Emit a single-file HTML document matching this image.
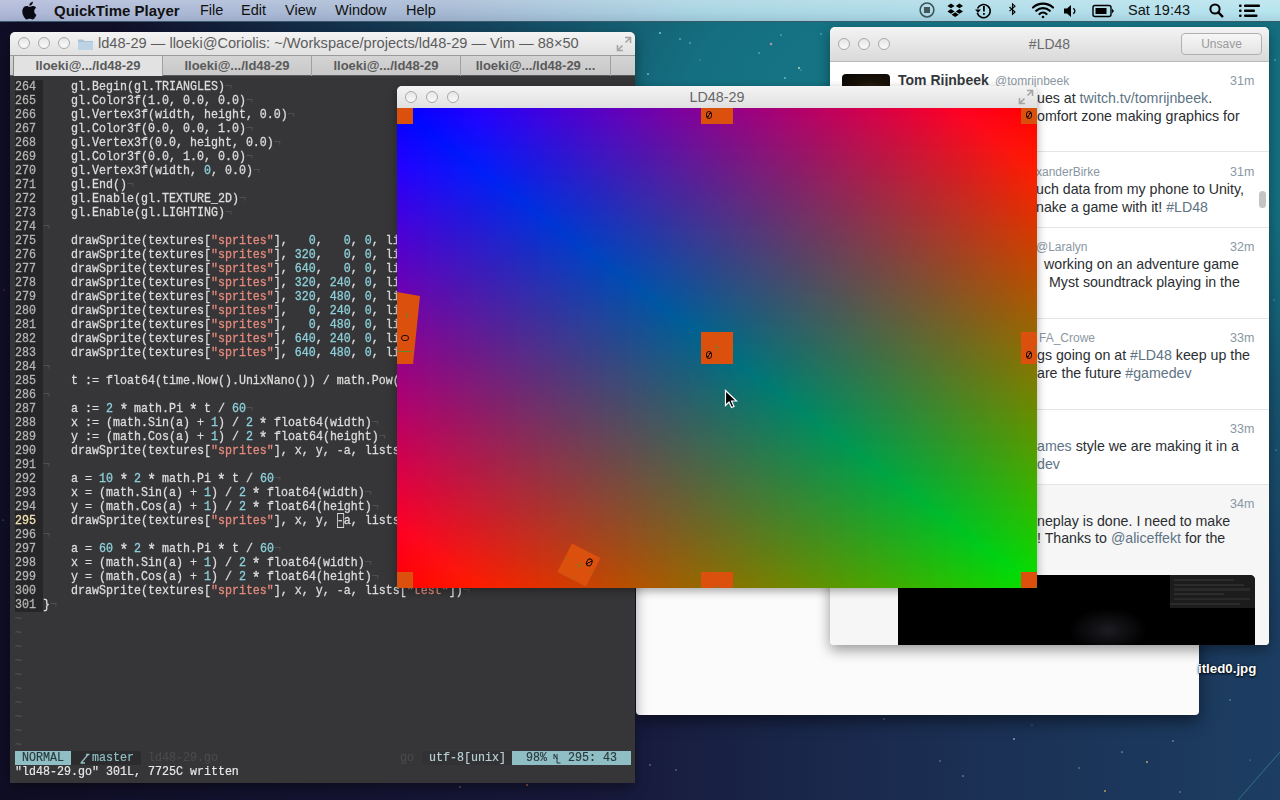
<!DOCTYPE html>
<html><head><meta charset="utf-8">
<style>
*{margin:0;padding:0;box-sizing:border-box}
html,body{width:1280px;height:800px;overflow:hidden}
body{position:relative;font-family:"Liberation Sans",sans-serif;
background:radial-gradient(ellipse 900px 520px at 1000px 120px,#177a8a 0%,#147080 35%,rgba(20,100,120,.6) 60%,rgba(20,60,100,0) 100%),linear-gradient(to left,#1c3e62 0%,#1a2c50 30%,#17183a 55%,#100e26 100%);}
.abs{position:absolute}
#menubar{left:0;top:0;width:1280px;height:22px;background:linear-gradient(rgba(255,255,255,.16),rgba(255,255,255,0) 60%,rgba(0,20,60,.08)),linear-gradient(to right,#b0b9d8 0%,#a6b9d3 35%,#a8d4e2 55%,#b6e4ee 100%);border-bottom:1px solid #3a5a6a;font-size:14.5px;color:#111}
#menubar span{position:absolute;top:2px;white-space:nowrap}
.win{position:absolute;border-radius:5px 5px 0 0;box-shadow:0 5px 14px rgba(0,0,0,.4)}
.title{position:absolute;left:0;top:0;right:0;height:22px;background:linear-gradient(#f4f4f4,#e0e0e0);border-radius:5px 5px 0 0;color:#5c5c5c;font-size:13px;text-align:center;line-height:22px;white-space:nowrap}
.tl{position:absolute;top:5px;width:12px;height:12px;border-radius:50%;border:1px solid #a8a8a8;background:linear-gradient(#e6e6e6,#fafafa)}
#vim{left:10px;top:32px;width:625px;height:751px;background:#363638}
#vim .title{height:23px;line-height:23px;font-size:14.6px;text-align:left}
#tabs{position:absolute;left:0;top:23px;width:625px;height:21px;background:linear-gradient(#d4d4d4,#c8c8c8);border-top:1px solid #9a9a9a;border-bottom:1px solid #5a5a5a}
.tab{position:absolute;top:0;height:20px;line-height:19px;font-size:13px;font-weight:bold;color:#5a5a5a;text-align:center;border-left:1px solid #a0a0a0}
#code{position:absolute;left:5px;top:48px;font-family:"Liberation Mono",monospace;font-size:13.4px;line-height:14px;color:#dcdcdc;white-space:pre;-webkit-text-stroke:0.3px;transform:scaleX(0.8706);transform-origin:0 0}
.ln{background:#262628;color:#b4b4b4;display:inline-block}
.cur{color:#f0e0b0}
.n{color:#8dd0da}
.s{color:#e58a7c}
.e{color:#505054}
.ast{display:inline-block;transform:translateY(2px) scale(1.25)}
.cu{outline:1px solid #d8d8d8;outline-offset:-1px}
#gl{left:397px;top:86px;width:640px;height:502px;background:#ddd;box-shadow:0 3px 10px rgba(0,0,0,.35)}
#glc{position:absolute;left:0;top:22px;width:640px;height:480px;overflow:hidden;background:linear-gradient(to top right,#ff0000,#000 50%,#ff0000)}
.tri{position:absolute;left:0;top:0;width:640px;height:480px}
#t1{clip-path:polygon(0 0,100% 0,100% 100%);background:linear-gradient(to bottom,#000,#00c400),linear-gradient(to right,#0000ff,#000),linear-gradient(to top right,#000 50%,#ff0000);background-blend-mode:screen}
#t2{clip-path:polygon(0 0,4px 0,100% calc(100% - 4px),100% 100%,0 100%);background:linear-gradient(to right,#000,#00c400),linear-gradient(to bottom,#0000ff,#000),linear-gradient(to top right,#ff0000,#000 50%);background-blend-mode:screen}
.spr{position:absolute;width:32px;height:32px;background:#dc500e}
.spr i{position:absolute;left:5px;top:19px;width:6px;height:8px;border:1.5px solid #1a0a00;border-radius:3px;font-style:normal;background:linear-gradient(to bottom right,transparent 42%,#1a0a00 42%,#1a0a00 58%,transparent 58%)}
.spr::before{content:'';position:absolute;left:0;top:15px;width:32px;height:1px;background:linear-gradient(to right,#5f8a2c 0 3px,transparent 3px 13px,#5f8a2c 13px 19px,transparent 19px 29px,#5f8a2c 29px);opacity:.45}
.spr::after{content:'';position:absolute;left:15px;top:0;width:1px;height:32px;background:linear-gradient(#5f8a2c 0 3px,transparent 3px 13px,#5f8a2c 13px 19px,transparent 19px 29px,#5f8a2c 29px);opacity:.45}
#tw{left:830px;top:27px;width:439px;height:618px;background:#fff;border-radius:5px 5px 4px 4px;overflow:hidden}
#wh{left:636px;top:560px;width:563px;height:155px;background:#fbfbfb;border-radius:0 0 4px 4px;box-shadow:0 6px 16px rgba(0,0,0,.5)}
.sep{position:absolute;left:0;width:439px;height:1px;background:#e3e6e8}
</style></head><body>
<svg class="abs" style="left:0;top:0" width="1280" height="800"><circle opacity=".75" cx="660" cy="33" r="0.96" fill="#8ff"/><circle opacity=".75" cx="680" cy="39" r="0.78" fill="#cff"/><circle opacity=".75" cx="690" cy="43" r="0.72" fill="#aff"/><circle opacity=".75" cx="771" cy="44" r="1.32" fill="#d9a0c0"/><circle opacity=".75" cx="759" cy="53" r="0.78" fill="#aef"/><circle opacity=".75" cx="781" cy="35" r="0.72" fill="#9ee"/><circle opacity=".75" cx="799" cy="68" r="0.90" fill="#ffe"/><circle opacity=".75" cx="821" cy="34" r="0.78" fill="#9df"/><circle opacity=".75" cx="801" cy="70" r="0.60" fill="#cce"/><circle opacity=".75" cx="785" cy="78" r="0.84" fill="#cff"/><circle opacity=".75" cx="648" cy="74" r="0.90" fill="#8ef"/><circle opacity=".75" cx="700" cy="60" r="0.60" fill="#8cc"/><circle opacity=".75" cx="1014" cy="739" r="0.96" fill="#9cf"/><circle opacity=".75" cx="1122" cy="752" r="0.84" fill="#9cf"/><circle opacity=".75" cx="1147" cy="762" r="0.96" fill="#ffd070"/><circle opacity=".75" cx="1173" cy="741" r="0.84" fill="#8cf"/><circle opacity=".75" cx="1105" cy="791" r="0.96" fill="#ffc060"/><circle opacity=".75" cx="1079" cy="768" r="0.72" fill="#9cf"/><circle opacity=".75" cx="963" cy="776" r="0.72" fill="#ddd"/><circle opacity=".75" cx="1180" cy="792" r="0.72" fill="#9cf"/><circle opacity=".75" cx="1032" cy="725" r="0.60" fill="#9bd"/><circle opacity=".75" cx="884" cy="719" r="0.78" fill="#aaf"/><circle opacity=".75" cx="940" cy="761" r="0.78" fill="#aaf"/><circle opacity=".75" cx="676" cy="770" r="0.66" fill="#ccc"/><circle opacity=".75" cx="650" cy="765" r="0.66" fill="#ccc"/><circle opacity=".75" cx="460" cy="787" r="0.84" fill="#e09050"/><circle opacity=".75" cx="527" cy="785" r="0.96" fill="#e08050"/><circle opacity=".75" cx="1275" cy="60" r="0.72" fill="#aff"/><circle opacity=".75" cx="1274" cy="300" r="0.60" fill="#aff"/><circle opacity=".75" cx="1276" cy="450" r="0.60" fill="#aff"/><circle opacity=".75" cx="4" cy="290" r="0.60" fill="#d07070"/><circle opacity=".75" cx="3" cy="520" r="0.60" fill="#aac"/><circle opacity=".75" cx="1230" cy="700" r="0.72" fill="#9cf"/><circle opacity=".75" cx="1250" cy="760" r="0.60" fill="#9cf"/><path d="M1238 800 L1280 752" stroke="#3a8a8a" stroke-width="1" opacity=".7"/></svg>

<div id="wh" class="abs"></div>
<div class="abs" style="left:1198px;top:661px;font-size:13.3px;font-weight:bold;color:#fff;text-shadow:0 1px 2px #000,0 0 3px rgba(0,0,0,.6)">itled0.jpg</div>

<div id="tw" class="win">
  <div class="title" style="height:35px;line-height:35px;font-size:14px;color:#6a6a6a;border-bottom:1px solid #b8b8b8;background:linear-gradient(#f3f3f3,#dadada)">#LD48
    <div class="tl" style="left:8px;top:11px"></div><div class="tl" style="left:28px;top:11px"></div><div class="tl" style="left:48px;top:11px"></div>
    <div class="abs" style="left:351px;top:6px;width:81px;height:22px;border:1px solid #b0b0b0;border-radius:4px;background:linear-gradient(#f6f6f6,#e4e4e4);line-height:20px;font-size:12px;color:#9a9a9a">Unsave</div>
  </div>
  <div class="abs" style="left:12px;top:47px;width:48px;height:48px;border-radius:4px;background:radial-gradient(circle at 60% 70%,#6a5030,#1a1208 60%,#050403)"></div>
  <div class="sep" style="top:124px"></div>
  <div class="sep" style="top:200px"></div>
  <div class="sep" style="top:291px"></div>
  <div class="sep" style="top:382px"></div>
  <div class="abs" style="left:0;top:457px;width:439px;height:161px;background:#f6f6f7;border-top:1px solid #e3e6e8"></div>
  <div class="abs" style="left:429px;top:164px;width:7px;height:17px;border-radius:4px;background:#c4c4c4"></div>
  <div class="abs" style="left:68px;top:548px;width:357px;height:70px;background:#000;border-radius:0 5px 0 0">
    <div class="abs" style="left:272px;top:0;width:85px;height:33px;background:#1c1c1c;border-radius:0 5px 0 0">
      <div class="abs" style="left:4px;top:4px;width:60px;height:2px;background:#2c2c2c"></div>
      <div class="abs" style="left:4px;top:9px;width:70px;height:2px;background:#2c2c2c"></div>
      <div class="abs" style="left:4px;top:13px;width:76px;height:3px;background:#2a2a2a"></div>
      <div class="abs" style="left:4px;top:18px;width:50px;height:2px;background:#2c2c2c"></div>
      <div class="abs" style="left:4px;top:23px;width:76px;height:2px;background:#2a2a2a"></div>
      <div class="abs" style="left:0;top:28px;width:70px;height:2px;background:#2a2a2a"></div>
    </div>
    <div class="abs" style="left:170px;top:33px;width:80px;height:37px;background:radial-gradient(ellipse at 50% 60%,#1c1c22,#000 70%)"></div>
  </div>
</div>
<div class="abs" style="left:0;top:0;width:1280px;height:800px;pointer-events:none">
<div class="abs" style="left:898px;top:71px;font-size:14px;line-height:18px;color:#33383c;font-weight:bold;white-space:nowrap">Tom Rijnbeek</div>
<div class="abs" style="left:995px;top:72px;font-size:12px;line-height:18px;color:#8a97a3;font-weight:normal;white-space:nowrap">@tomrijnbeek</div>
<div class="abs" style="left:1230px;top:72px;font-size:12.5px;line-height:18px;color:#8a97a3;font-weight:normal;white-space:nowrap">31m</div>
<div class="abs" style="left:1037px;top:89px;font-size:14.2px;line-height:18px;color:#2a2e31;font-weight:normal;white-space:nowrap">ues at <span style="color:#5e7484">twitch.tv/tomrijnbeek</span>.</div>
<div class="abs" style="left:1037px;top:107px;font-size:14.2px;line-height:18px;color:#2a2e31;font-weight:normal;white-space:nowrap">omfort zone making graphics for</div>
<div class="abs" style="left:1036px;top:163px;font-size:12px;line-height:18px;color:#8a97a3;font-weight:normal;white-space:nowrap">xanderBirke</div>
<div class="abs" style="left:1230px;top:163px;font-size:12.5px;line-height:18px;color:#8a97a3;font-weight:normal;white-space:nowrap">31m</div>
<div class="abs" style="left:1036px;top:180px;font-size:14.2px;line-height:18px;color:#2a2e31;font-weight:normal;white-space:nowrap">uch data from my phone to Unity,</div>
<div class="abs" style="left:1036px;top:197.5px;font-size:14.2px;line-height:18px;color:#2a2e31;font-weight:normal;white-space:nowrap">nake a game with it! <span style="color:#5e7484">#LD48</span></div>
<div class="abs" style="left:1036px;top:238px;font-size:12px;line-height:18px;color:#8a97a3;font-weight:normal;white-space:nowrap">@Laralyn</div>
<div class="abs" style="left:1230px;top:238px;font-size:12.5px;line-height:18px;color:#8a97a3;font-weight:normal;white-space:nowrap">32m</div>
<div class="abs" style="left:1044px;top:255px;font-size:14.2px;line-height:18px;color:#2a2e31;font-weight:normal;white-space:nowrap">working on an adventure game</div>
<div class="abs" style="left:1049px;top:272.5px;font-size:14.2px;line-height:18px;color:#2a2e31;font-weight:normal;white-space:nowrap">Myst soundtrack playing in the</div>
<div class="abs" style="left:1039px;top:329px;font-size:12px;line-height:18px;color:#8a97a3;font-weight:normal;white-space:nowrap">FA_Crowe</div>
<div class="abs" style="left:1230px;top:329px;font-size:12.5px;line-height:18px;color:#8a97a3;font-weight:normal;white-space:nowrap">33m</div>
<div class="abs" style="left:1037px;top:346px;font-size:14.2px;line-height:18px;color:#2a2e31;font-weight:normal;white-space:nowrap">gs going on at <span style="color:#5e7484">#LD48</span> keep up the</div>
<div class="abs" style="left:1037px;top:363.5px;font-size:14.2px;line-height:18px;color:#2a2e31;font-weight:normal;white-space:nowrap">are the future <span style="color:#5e7484">#gamedev</span></div>
<div class="abs" style="left:1230px;top:420px;font-size:12.5px;line-height:18px;color:#8a97a3;font-weight:normal;white-space:nowrap">33m</div>
<div class="abs" style="left:1037px;top:437px;font-size:14.2px;line-height:18px;color:#2a2e31;font-weight:normal;white-space:nowrap"><span style="color:#5e7484">ames</span> style we are making it in a</div>
<div class="abs" style="left:1037px;top:454.5px;font-size:14.2px;line-height:18px;color:#2a2e31;font-weight:normal;white-space:nowrap"><span style="color:#5e7484">dev</span></div>
<div class="abs" style="left:1230px;top:495px;font-size:12.5px;line-height:18px;color:#8a97a3;font-weight:normal;white-space:nowrap">34m</div>
<div class="abs" style="left:1037px;top:512px;font-size:14.2px;line-height:18px;color:#2a2e31;font-weight:normal;white-space:nowrap">neplay is done. I need to make</div>
<div class="abs" style="left:1037px;top:529px;font-size:14.2px;line-height:18px;color:#2a2e31;font-weight:normal;white-space:nowrap">! Thanks to <span style="color:#5e7484">@aliceffekt</span> for the</div>

</div>

<div id="vim" class="win">
  <div class="title">
    <div class="tl" style="left:8px;top:5px"></div><div class="tl" style="left:28px;top:5px"></div><div class="tl" style="left:48px;top:5px"></div>
    <svg class="abs" style="left:67px;top:5px" width="17" height="14" viewBox="0 0 17 14"><path d="M1 2.5h5l1.5 1.5H16v9H1z" fill="#a9c3d8"/><path d="M1 5h15v8H1z" fill="#bcd3e4"/></svg>
    <svg class="abs" style="left:606px;top:4px" width="16" height="16" viewBox="0 0 16 16"><path d="M9 1.5h5.5V7 M14.5 1.5L9.5 6.5 M7 14.5H1.5V9 M1.5 14.5l5-5" fill="none" stroke="#a4a4a4" stroke-width="1.6"/></svg>
    <span style="position:absolute;left:88px;top:0">ld48-29 — lloeki@Coriolis: ~/Workspace/projects/ld48-29 — Vim — 88×50</span>
  </div>
  <div id="tabs">
    <div class="tab" style="left:3px;width:149px;background:#e2e2e2;border-left:1px solid #888">lloeki@.../ld48-29</div>
    <div class="tab" style="left:152px;width:149px">lloeki@.../ld48-29</div>
    <div class="tab" style="left:301px;width:149px">lloeki@.../ld48-29</div>
    <div class="tab" style="left:450px;width:150px">lloeki@.../ld48-29 ...</div>
    <div class="tab" style="left:600px;width:25px"></div>
  </div>
  <div id="code"><span class="ln">264 </span>    gl.Begin(gl.TRIANGLES)<span class="e">¬</span>
<span class="ln">265 </span>    gl.Color3f(1.0, 0.0, 0.0)<span class="e">¬</span>
<span class="ln">266 </span>    gl.Vertex3f(width, height, 0.0)<span class="e">¬</span>
<span class="ln">267 </span>    gl.Color3f(0.0, 0.0, 1.0)<span class="e">¬</span>
<span class="ln">268 </span>    gl.Vertex3f(0.0, height, 0.0)<span class="e">¬</span>
<span class="ln">269 </span>    gl.Color3f(0.0, 1.0, 0.0)<span class="e">¬</span>
<span class="ln">270 </span>    gl.Vertex3f(width, <span class="n">0</span>, 0.0)<span class="e">¬</span>
<span class="ln">271 </span>    gl.End()<span class="e">¬</span>
<span class="ln">272 </span>    gl.Enable(gl.TEXTURE_2D)<span class="e">¬</span>
<span class="ln">273 </span>    gl.Enable(gl.LIGHTING)<span class="e">¬</span>
<span class="ln">274 </span><span class="e">¬</span>
<span class="ln">275 </span>    drawSprite(textures[<span class="s">"sprites"</span>],   <span class="n">0</span>,   <span class="n">0</span>, <span class="n">0</span>, lists["test"])<span class="e">¬</span>
<span class="ln">276 </span>    drawSprite(textures[<span class="s">"sprites"</span>], <span class="n">320</span>,   <span class="n">0</span>, <span class="n">0</span>, lists["test"])<span class="e">¬</span>
<span class="ln">277 </span>    drawSprite(textures[<span class="s">"sprites"</span>], <span class="n">640</span>,   <span class="n">0</span>, <span class="n">0</span>, lists["test"])<span class="e">¬</span>
<span class="ln">278 </span>    drawSprite(textures[<span class="s">"sprites"</span>], <span class="n">320</span>, <span class="n">240</span>, <span class="n">0</span>, lists["test"])<span class="e">¬</span>
<span class="ln">279 </span>    drawSprite(textures[<span class="s">"sprites"</span>], <span class="n">320</span>, <span class="n">480</span>, <span class="n">0</span>, lists["test"])<span class="e">¬</span>
<span class="ln">280 </span>    drawSprite(textures[<span class="s">"sprites"</span>],   <span class="n">0</span>, <span class="n">240</span>, <span class="n">0</span>, lists["test"])<span class="e">¬</span>
<span class="ln">281 </span>    drawSprite(textures[<span class="s">"sprites"</span>],   <span class="n">0</span>, <span class="n">480</span>, <span class="n">0</span>, lists["test"])<span class="e">¬</span>
<span class="ln">282 </span>    drawSprite(textures[<span class="s">"sprites"</span>], <span class="n">640</span>, <span class="n">240</span>, <span class="n">0</span>, lists["test"])<span class="e">¬</span>
<span class="ln">283 </span>    drawSprite(textures[<span class="s">"sprites"</span>], <span class="n">640</span>, <span class="n">480</span>, <span class="n">0</span>, lists["test"])<span class="e">¬</span>
<span class="ln">284 </span><span class="e">¬</span>
<span class="ln">285 </span>    t := float64(time.Now().UnixNano()) / math.Pow(10, 9)<span class="e">¬</span>
<span class="ln">286 </span><span class="e">¬</span>
<span class="ln">287 </span>    a := <span class="n">2</span> <span class="ast">*</span> math.Pi <span class="ast">*</span> t / <span class="n">60</span><span class="e">¬</span>
<span class="ln">288 </span>    x := (math.Sin(a) + <span class="n">1</span>) / <span class="n">2</span> <span class="ast">*</span> float64(width)<span class="e">¬</span>
<span class="ln">289 </span>    y := (math.Cos(a) + <span class="n">1</span>) / <span class="n">2</span> <span class="ast">*</span> float64(height)<span class="e">¬</span>
<span class="ln">290 </span>    drawSprite(textures[<span class="s">"sprites"</span>], x, y, -a, lists[<span class="s">"test"</span>])<span class="e">¬</span>
<span class="ln">291 </span><span class="e">¬</span>
<span class="ln">292 </span>    a = <span class="n">10</span> <span class="ast">*</span> <span class="n">2</span> <span class="ast">*</span> math.Pi <span class="ast">*</span> t / <span class="n">60</span><span class="e">¬</span>
<span class="ln">293 </span>    x = (math.Sin(a) + <span class="n">1</span>) / <span class="n">2</span> <span class="ast">*</span> float64(width)<span class="e">¬</span>
<span class="ln">294 </span>    y = (math.Cos(a) + <span class="n">1</span>) / <span class="n">2</span> <span class="ast">*</span> float64(height)<span class="e">¬</span>
<span class="ln cur">295 </span>    drawSprite(textures[<span class="s">"sprites"</span>], x, y, <span class="cu">-</span>a, lists[<span class="s">"test"</span>])<span class="e">¬</span>
<span class="ln">296 </span><span class="e">¬</span>
<span class="ln">297 </span>    a = <span class="n">60</span> <span class="ast">*</span> <span class="n">2</span> <span class="ast">*</span> math.Pi <span class="ast">*</span> t / <span class="n">60</span><span class="e">¬</span>
<span class="ln">298 </span>    x = (math.Sin(a) + <span class="n">1</span>) / <span class="n">2</span> <span class="ast">*</span> float64(width)<span class="e">¬</span>
<span class="ln">299 </span>    y = (math.Cos(a) + <span class="n">1</span>) / <span class="n">2</span> <span class="ast">*</span> float64(height)<span class="e">¬</span>
<span class="ln">300 </span>    drawSprite(textures[<span class="s">"sprites"</span>], x, y, -a, lists[<span class="s">"test"</span>])<span class="e">¬</span>
<span class="ln">301 </span>}<span class="e">¬</span>
<span class="e">~</span>
<span class="e">~</span>
<span class="e">~</span>
<span class="e">~</span>
<span class="e">~</span>
<span class="e">~</span>
<span class="e">~</span>
<span class="e">~</span>
<span class="e">~</span>
<span class="e">~</span></div>
  <div class="abs" style="left:5px;top:719px;width:616px;height:14px;font-family:'Liberation Mono',monospace;font-size:13.4px;line-height:14px;white-space:pre;color:#d0d0d0;-webkit-text-stroke:0.2px">
    <span class="abs" style="left:0;top:0;width:56px;height:14px;background:#8fbfc4;color:#2a3a3c"><b style="font-weight:normal;display:inline-block;transform:scaleX(0.8706);transform-origin:0 0"> NORMAL </b></span>
    <span class="abs" style="left:56px;top:0;width:70px;height:14px;background:#2c2c2e;color:#8fbfc4"><b style="font-weight:normal;display:inline-block;transform:scaleX(0.8706);transform-origin:0 0">   master </b><svg class="abs" style="left:9px;top:2px" width="10" height="11" viewBox="0 0 10 11"><path d="M1 10L8 1.5M0.5 10H5M6 1.5H9.5" stroke="#8fbfc4" stroke-width="1.3" fill="none"/></svg></span>
    <span class="abs" style="left:133px;top:0;color:#4a4a4e"><b style="font-weight:normal;display:inline-block;transform:scaleX(0.8706);transform-origin:0 0">ld48-29.go</b></span>
    <span class="abs" style="left:385px;top:0;color:#4a4a4e"><b style="font-weight:normal;display:inline-block;transform:scaleX(0.8706);transform-origin:0 0">go</b></span>
    <span class="abs" style="left:407px;top:0;width:90px;height:14px;background:#323234;overflow:hidden;color:#b8d0d4"><b style="font-weight:normal;display:inline-block;transform:scaleX(0.8706);transform-origin:0 0"> utf-8[unix] </b></span>
    <span class="abs" style="left:497px;top:0;width:119px;height:14px;background:#8fbfc4;color:#2a3a3c"><b style="font-weight:normal;display:inline-block;transform:scaleX(0.8706);transform-origin:0 0">  98%   295: 43 </b><svg class="abs" style="left:41px;top:2px" width="8" height="11" viewBox="0 0 8 11"><path d="M1 6V1l3 5V1M4 5v5h3.5" stroke="#2a3a3c" stroke-width="1" fill="none"/></svg></span>
  </div>
  <div class="abs" style="left:5px;top:733px;font-family:'Liberation Mono',monospace;font-size:13.4px;line-height:14px;white-space:pre;color:#e8e8e8;-webkit-text-stroke:0.2px;transform:scaleX(0.8706);transform-origin:0 0">"ld48-29.go" 301L, 7725C written</div>
</div>

<div id="gl" class="win">
  <div class="title" style="font-size:14.3px;color:#666">LD48-29
    <div class="tl" style="left:8px"></div><div class="tl" style="left:29px"></div><div class="tl" style="left:50px"></div>
    <svg class="abs" style="left:621px;top:3px" width="16" height="16" viewBox="0 0 16 16"><path d="M9 1.5h5.5V7 M14.5 1.5L9.5 6.5 M7 14.5H1.5V9 M1.5 14.5l5-5" fill="none" stroke="#a4a4a4" stroke-width="1.6"/></svg>
  </div>
  <div id="glc">
    <div class="abs" style="left:0;top:0;width:640px;height:480px;filter:brightness(1.15);background:linear-gradient(to top right,#ff0000,#000 50%,#ff0000)">
    <div id="t1" class="tri"></div>
    <div id="t2" class="tri"></div>
    </div>
    <div class="abs" style="left:0;top:0;width:640px;height:480px;background:radial-gradient(ellipse 420px 330px at 50% 50%,rgba(0,0,0,.08),rgba(0,0,0,.04) 60%,rgba(0,0,0,0) 100%)"></div>
    <div class="spr" style="left:-16px;top:-16px"><i></i></div>
    <div class="spr" style="left:304px;top:-16px"><i></i></div>
    <div class="spr" style="left:624px;top:-16px"><i></i></div>
    <div class="spr" style="left:-16px;top:224px"><i></i></div>
    <div class="spr" style="left:304px;top:224px"><i></i></div>
    <div class="spr" style="left:624px;top:224px"><i></i></div>
    <div class="spr" style="left:-16px;top:464px"><i></i></div>
    <div class="spr" style="left:304px;top:464px"><i></i></div>
    <div class="spr" style="left:624px;top:464px"><i></i></div>
    <div class="abs" style="left:0;top:0;width:30px;height:260px;background:#dc500e;clip-path:polygon(0 184px,23px 188px,16px 256px,0 256px)"></div>
    <i class="abs" style="left:4px;top:227px;width:8px;height:6px;border:1.5px solid #1a0a00;border-radius:3px"></i><div class="abs" style="left:1px;top:243px;width:14px;height:1px;background:#5f8a2c"></div><div class="abs" style="left:10px;top:205px;width:1px;height:5px;background:#5f8a2c"></div>
    <div class="spr" style="left:166px;top:441px;transform:rotate(207deg)"><i></i></div>
  </div>
</div>

<div id="menubar" class="abs">
  <svg class="abs" style="left:19px;top:0px" width="18" height="21" viewBox="0 0 18 21"><path fill="#0a0a14" d="M15.2 11.1c0-2.2 1.8-3.3 1.9-3.4-1-1.5-2.6-1.7-3.2-1.7-1.4-.1-2.6.8-3.3.8-.7 0-1.7-.8-2.9-.8-1.5 0-2.9.9-3.6 2.2-1.6 2.7-.4 6.8 1.1 9 .7 1.1 1.6 2.3 2.7 2.2 1.1 0 1.5-.7 2.8-.7s1.7.7 2.9.7c1.2 0 1.9-1.1 2.6-2.1.8-1.2 1.2-2.4 1.2-2.5 0 0-2.3-.9-2.2-3.7zM13 4.5c.6-.7 1-1.7.9-2.7-.9 0-1.9.6-2.6 1.3-.6.6-1.1 1.6-.9 2.6 1 .1 2-.5 2.6-1.2z"/></svg>
  <span style="left:54px;font-weight:bold;font-size:15px">QuickTime Player</span>
  <span style="left:200px">File</span>
  <span style="left:241px">Edit</span>
  <span style="left:285px">View</span>
  <span style="left:335px">Window</span>
  <span style="left:406px">Help</span>
  <span style="left:1128px">Sat 19:43</span>
  <svg class="abs" style="left:0;top:0" width="1280" height="22">
    <circle cx="927" cy="10" r="6.9" fill="none" stroke="#3a5458" stroke-width="1.5"/>
    <rect x="924" y="7" width="6" height="6" fill="#44585c"/>
    <g fill="#000">
      <path d="M951 3.5l3.6 2.4-3.6 2.4-3.6-2.4z M959.4 3.5l3.6 2.4-3.6 2.4-3.6-2.4z M951 9l3.6 2.4-3.6 2.4-3.6-2.4z M959.4 9l3.6 2.4-3.6 2.4-3.6-2.4z M955.2 12.3l3.6 2.4-3.6 2.4-3.6-2.4z"/>
    </g>
    <path d="M977.5 8.5 A6.6 6.6 0 1 1 977.2 12.8" fill="none" stroke="#000" stroke-width="1.6"/>
    <path d="M975 9.5 l3 3.2 3-3.2z" fill="#000"/>
    <rect x="983" y="6" width="1.8" height="5.5" fill="#000"/><rect x="983" y="13" width="1.8" height="1.8" fill="#000"/>
    <path d="M1009.5 7l5.5 5-2.5 2.2V4l2.5 2.2-5.5 5" fill="none" stroke="#000" stroke-width="1.1"/>
    <path d="M1033 7.5a15 15 0 0 1 20 0" fill="none" stroke="#000" stroke-width="2.2" stroke-linecap="round"/>
    <path d="M1036.2 10.8a10 10 0 0 1 13.6 0" fill="none" stroke="#000" stroke-width="2.2" stroke-linecap="round"/>
    <path d="M1039.5 14a5 5 0 0 1 7 0" fill="none" stroke="#000" stroke-width="2.2" stroke-linecap="round"/>
    <circle cx="1043" cy="17" r="1.3" fill="#000"/>
    <path d="M1064 8.5h3l4-3.5v12l-4-3.5h-3z" fill="#000"/>
    <path d="M1073.2 8.3a3 3 0 0 1 0 5.4" fill="none" stroke="#000" stroke-width="1.3"/>
    <rect x="1093" y="5.5" width="18" height="11" rx="2" fill="none" stroke="#000" stroke-width="1.4"/>
    <rect x="1095.5" y="8" width="11" height="6" fill="#000"/>
    <path d="M1112 8.5l2 2.5-2 2.5z" fill="#000"/>
    <circle cx="1215" cy="9" r="4.6" fill="none" stroke="#000" stroke-width="2"/>
    <path d="M1218.3 12.3l4 4" stroke="#000" stroke-width="2.4" stroke-linecap="round"/>
    <g fill="#000"><rect x="1239" y="4.5" width="2.6" height="2.4" rx="1"/><rect x="1239" y="9.6" width="2.6" height="2.4" rx="1"/><rect x="1239" y="14.6" width="2.6" height="2.4" rx="1"/>
    <rect x="1244" y="4.5" width="16" height="2.4" rx="1"/><rect x="1244" y="9.6" width="11" height="2.4" rx="1"/><rect x="1244" y="14.6" width="13.5" height="2.4" rx="1"/></g>
  </svg>
</div>
<svg class="abs" style="left:722px;top:388px" width="16" height="22" viewBox="0 0 16 22"><path d="M3.5 2.5 L3.5 17.5 L7 14 L9.5 19.5 L12 18.5 L9.5 13 L14.5 13 Z" fill="#000" stroke="#fff" stroke-width="1.2"/></svg>
</body></html>
